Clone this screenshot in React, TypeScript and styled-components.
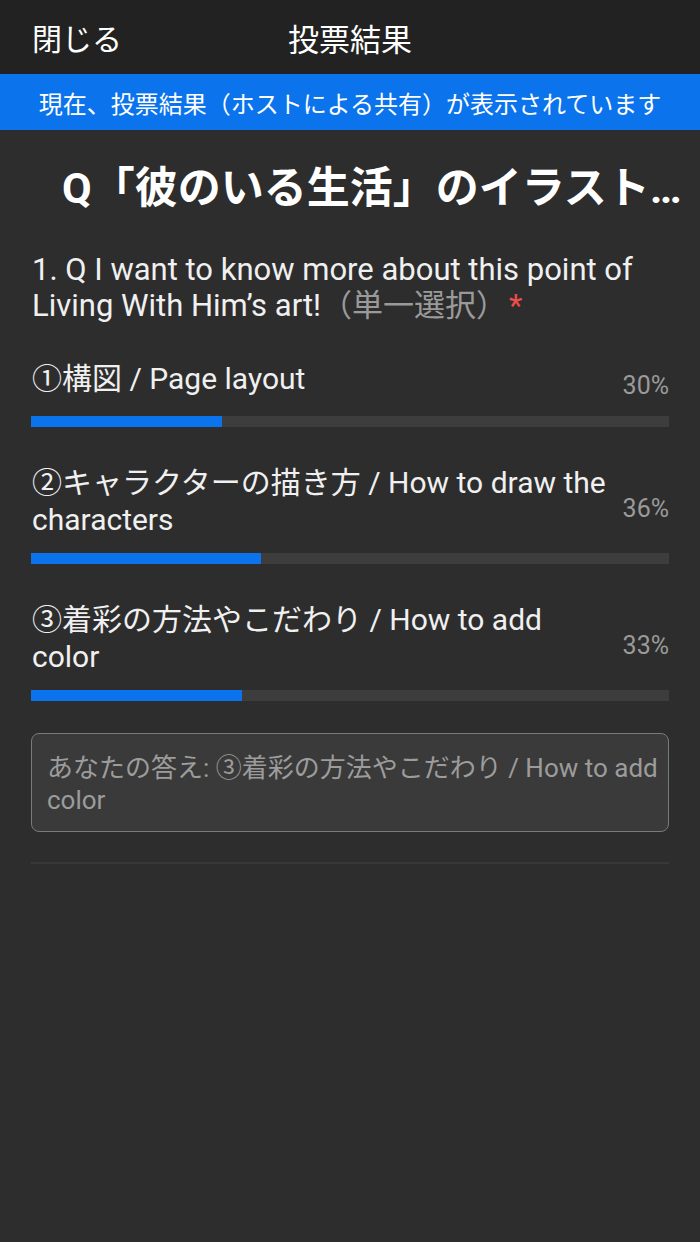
import React from "react"
import styled, { createGlobalStyle } from "styled-components"

const GlobalStyle = createGlobalStyle`
    html, body {
        margin: 0;
        padding: 0;
        background: #2d2d2d;
    }
    body {
        font-family: Roboto, "Noto Sans CJK JP", sans-serif;
        color: #f0f0f0;
    }
`

type Option = {
    label: string
    percent: number
}

const options: Option[] = [
    { label: "①構図 / Page layout", percent: 30 },
    { label: "②キャラクターの描き方 / How to draw the characters", percent: 36 },
    { label: "③着彩の方法やこだわり / How to add color", percent: 33 },
]

const App = () => {
    return (
        <SPage>
            <GlobalStyle />
            <SHeader>
                <SCloseBtn>閉じる</SCloseBtn>
                <SHeaderTitle>投票結果</SHeaderTitle>
            </SHeader>
            <SBanner>現在、投票結果（ホストによる共有）が表示されています</SBanner>

            <SContent>
                <STitle>Q「彼のいる生活」のイラストについて</STitle>

                <SQuestion>
                    1. Q I want to know more about this point of Living With Him’s art!
                    <SQuestionType>（単一選択）</SQuestionType>
                    <SRequired>*</SRequired>
                </SQuestion>

                <SOptionList>
                    {options.map((o) => (
                        <SOption key={o.label}>
                            <SOptionHead>
                                <SOptionLabel>{o.label}</SOptionLabel>
                                <SPercent>{o.percent}%</SPercent>
                            </SOptionHead>
                            <STrack>
                                <SFill style={{ width: `${o.percent}%` }} />
                            </STrack>
                        </SOption>
                    ))}
                </SOptionList>

                <SAnswerBox>あなたの答え: ③着彩の方法やこだわり / How to add color</SAnswerBox>

                <SDivider />
            </SContent>
        </SPage>
    )
}

export default App

const SPage = styled.div`
    width: 700px;
    min-height: 1242px;
    background: #2d2d2d;
`

const SHeader = styled.div`
    position: relative;
    display: flex;
    align-items: center;
    height: 74px;
    padding: 0 32px;
    background: #222222;
    box-sizing: border-box;
`

const SCloseBtn = styled.div`
    font-family: "Noto Sans CJK JP", sans-serif;
    font-size: 30px;
    color: #ffffff;
    line-height: 1;
    cursor: pointer;
`

const SHeaderTitle = styled.div`
    position: absolute;
    left: 0;
    right: 0;
    text-align: center;
    font-family: "Noto Sans CJK JP", sans-serif;
    font-size: 31px;
    color: #ffffff;
    line-height: 1;
    pointer-events: none;
`

const SBanner = styled.div`
    display: flex;
    align-items: center;
    justify-content: center;
    height: 56px;
    background: #0b73ec;
    color: #ffffff;
    font-family: "Noto Sans CJK JP", sans-serif;
    font-size: 24px;
    white-space: nowrap;
`

const SContent = styled.div`
    display: flex;
    flex-direction: column;
    padding: 0 31px 0 31px;
`

const STitle = styled.div`
    margin-top: 28px;
    margin-right: -31px;
    padding-left: 31px;
    font-family: Roboto, "Noto Sans CJK JP", sans-serif;
    font-size: 43px;
    font-weight: 700;
    line-height: 60px;
    color: #ffffff;
    white-space: nowrap;
    overflow: hidden;
    text-overflow: ellipsis;
`

const SQuestion = styled.div`
    margin-top: 34px;
    padding-left: 1px;
    font-size: 31px;
    line-height: 36px;
    color: #f0f0f0;
`

const SQuestionType = styled.span`
    color: #9a9a9a;
`

const SRequired = styled.span`
    color: #ee4d4d;
    margin-left: 2px;
`

const SOptionList = styled.div`
    display: flex;
    flex-direction: column;
    gap: 37px;
    margin-top: 31px;
`

const SOption = styled.div`
    display: flex;
    flex-direction: column;
    gap: 15px;
`

const SOptionHead = styled.div`
    display: flex;
    align-items: center;
    gap: 4px;
`

const SOptionLabel = styled.div`
    flex: 1;
    padding-left: 1px;
    font-size: 30px;
    line-height: 37px;
    color: #f0f0f0;
`

const SPercent = styled.div`
    width: 55px;
    padding-top: 16px;
    font-size: 25px;
    line-height: 30px;
    text-align: right;
    color: #9a9a9a;
    white-space: nowrap;
`

const STrack = styled.div`
    height: 11px;
    background: #3d3d3d;
`

const SFill = styled.div`
    height: 100%;
    background: #0b73ec;
`

const SAnswerBox = styled.div`
    margin-top: 32px;
    min-height: 99px;
    box-sizing: border-box;
    padding: 18px 2px 14px 15px;
    border: 1.5px solid #7a7a7a;
    border-radius: 8px;
    background: #3a3a3a;
    font-size: 26px;
    line-height: 32px;
    color: #9c9c9c;
`

const SDivider = styled.div`
    margin-top: 30px;
    height: 2px;
    background: #383838;
`
